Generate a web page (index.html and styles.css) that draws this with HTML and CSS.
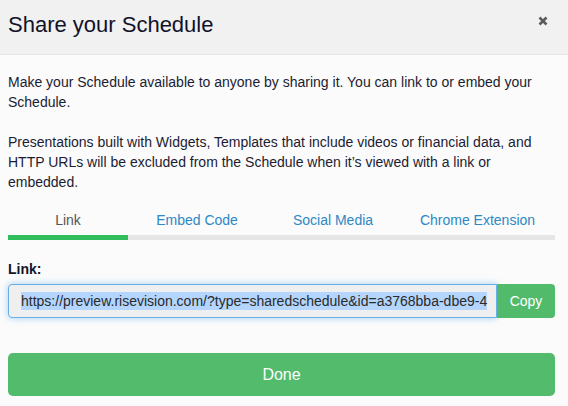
FILE: index.html
```html
<!DOCTYPE html>
<html lang="en">
<head>
    <meta charset="UTF-8">
    <meta name="viewport" content="width=device-width, initial-scale=1.0">
    <title>Share your Schedule</title>
    <link rel="stylesheet" href="styles.css">
</head>
<body>
    <div class="modal-header">
        <h2>Share your Schedule</h2>
        <button type="button" class="close" aria-label="Close">
            <svg width="10" height="10" viewBox="0 0 10 10">
                <path d="M1.5 1.5 L8.5 8.5 M8.5 1.5 L1.5 8.5" stroke="#5b5b5b" stroke-width="2.6" stroke-linecap="butt"/>
            </svg>
        </button>
    </div>
    <div class="modal-body">
        <p>Make your Schedule available to anyone by sharing it. You can link to or embed your Schedule.</p>
        <p class="last">Presentations built with Widgets, Templates that include videos or financial data, and HTTP URLs will be excluded from the Schedule when it’s viewed with a link or embedded.</p>

        <div class="tabs">
            <div class="tab active">Link</div>
            <div class="tab">Embed Code</div>
            <div class="tab">Social Media</div>
            <div class="tab">Chrome Extension</div>
        </div>

        <label class="field-label">Link:</label>
        <div class="input-group">
            <div class="link-input">
                <div class="link-text"><span class="selected">https://preview.risevision.com/?type=sharedschedule&amp;id=a3768bba-dbe9-4</span></div>
            </div>
            <button type="button" class="btn btn-copy">Copy</button>
        </div>

        <button type="button" class="btn btn-done">Done</button>
    </div>
</body>
</html>
```

FILE: styles.css
```css
body {
    margin: 0;
    background-color: #fbfbfb;
    font-family: "Liberation Sans", Arial, sans-serif;
    font-size: 14px;
    color: #1c1c32;
}
.modal-header {
    box-sizing: border-box;
    height: 55px;
    display: flex;
    justify-content: space-between;
    align-items: flex-start;
    padding: 13px 20px 0 8px;
    background-color: #f1f1f1;
    border-bottom: 1px solid #e3e3e3;
}
.modal-header h2 {
    margin: 0;
    font-size: 22px;
    font-weight: normal;
    line-height: 1.1;
    color: #12122a;
}
.close {
    margin-top: 3px;
    padding: 0;
    border: none;
    background: none;
    line-height: 0;
    cursor: pointer;
}
.modal-body {
    padding: 17px 13px 0 8px;
}
.modal-body p {
    margin: 0 0 20px;
    line-height: 20px;
}
.modal-body p.last {
    margin-bottom: 0;
}
.tabs {
    display: grid;
    grid-template-columns: 120px 138px 134px 1fr;
    margin-top: 18px;
}
.tab {
    text-align: center;
    line-height: 20px;
    padding-bottom: 5px;
    border-bottom: 5px solid #e6e6e6;
    color: #2d88c5;
}
.tab.active {
    color: #555;
    border-bottom-color: #30bd5b;
}
.field-label {
    display: block;
    margin: 19px 0 5px;
    font-weight: bold;
    line-height: 20px;
    color: #14142a;
}
.input-group {
    display: flex;
    height: 34px;
}
.link-input {
    flex: 1;
    min-width: 0;
    box-sizing: border-box;
    padding: 0 6px 0 12px;
    background-color: #efefef;
    border: 1px solid #66afe9;
    border-radius: 4px 0 0 4px;
    box-shadow: 0 0 7px rgba(102, 175, 233, 0.6);
    line-height: 32px;
    color: #2a2a2a;
}
.link-text {
    white-space: nowrap;
    overflow: hidden;
}
.selected {
    background-color: #b4d5fd;
    padding: 1px 0;
}
.btn {
    border: none;
    color: white;
    font-family: inherit;
    cursor: pointer;
}
.btn-copy {
    width: 58px;
    font-size: 14px;
    background-color: #52bb6b;
    border-radius: 0 4px 4px 0;
}
.btn-done {
    display: block;
    width: 100%;
    height: 43px;
    margin-top: 35px;
    font-size: 16px;
    background-color: #52bb6c;
    border-radius: 5px;
}
```
